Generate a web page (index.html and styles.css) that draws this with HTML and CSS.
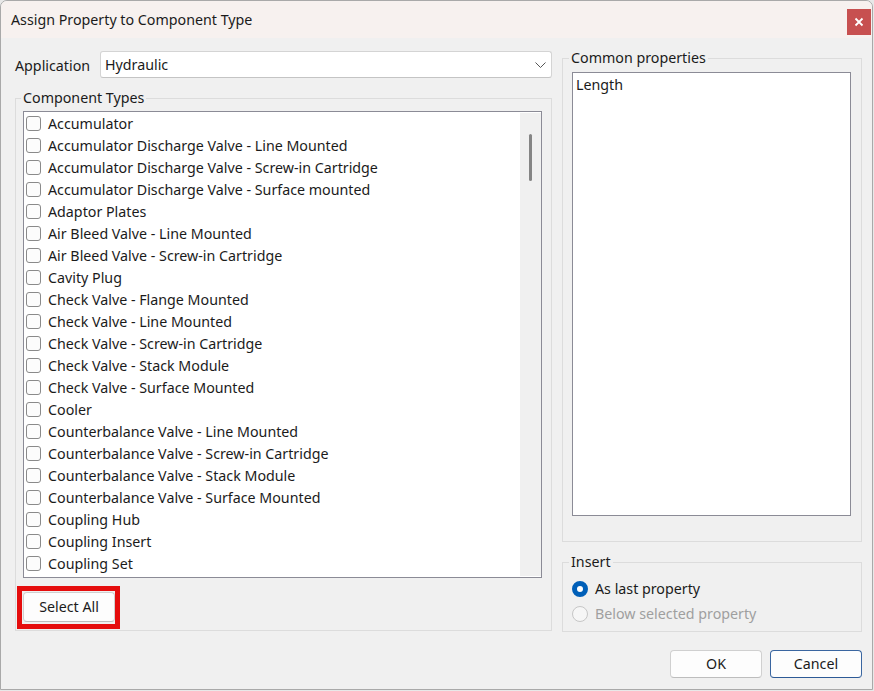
FILE: index.html
```html
<!DOCTYPE html>
<html>
<head>
<meta charset="utf-8">
<link rel="stylesheet" href="styles.css">
</head>
<body>
<div class="window">
  <div class="titlebar">
    <span class="title">Assign Property to Component Type</span>
    <button class="close" aria-label="Close">
      <svg width="10" height="10" viewBox="0 0 10 10"><path d="M1.5 1.5 L8.5 8.5 M8.5 1.5 L1.5 8.5" stroke="#fff" stroke-width="1.8" fill="none"/></svg>
    </button>
  </div>
  <div class="content">
    <div class="col-left">
      <div class="app-row">
        <span class="app-label">Application</span>
        <div class="select">
          <span>Hydraulic</span>
          <svg class="chev" width="11" height="7" viewBox="0 0 11 7"><polyline points="0.5,0.5 5.5,5.5 10.5,0.5" stroke="#555" stroke-width="1" fill="none"/></svg>
        </div>
      </div>
      <fieldset class="group group-types">
        <legend>Component Types</legend>
        <div class="listbox types">
          <div class="items">
            <div class="item"><span class="cb"></span>Accumulator</div>
            <div class="item"><span class="cb"></span>Accumulator Discharge Valve - Line Mounted</div>
            <div class="item"><span class="cb"></span>Accumulator Discharge Valve - Screw-in Cartridge</div>
            <div class="item"><span class="cb"></span>Accumulator Discharge Valve - Surface mounted</div>
            <div class="item"><span class="cb"></span>Adaptor Plates</div>
            <div class="item"><span class="cb"></span>Air Bleed Valve - Line Mounted</div>
            <div class="item"><span class="cb"></span>Air Bleed Valve - Screw-in Cartridge</div>
            <div class="item"><span class="cb"></span>Cavity Plug</div>
            <div class="item"><span class="cb"></span>Check Valve - Flange Mounted</div>
            <div class="item"><span class="cb"></span>Check Valve - Line Mounted</div>
            <div class="item"><span class="cb"></span>Check Valve - Screw-in Cartridge</div>
            <div class="item"><span class="cb"></span>Check Valve - Stack Module</div>
            <div class="item"><span class="cb"></span>Check Valve - Surface Mounted</div>
            <div class="item"><span class="cb"></span>Cooler</div>
            <div class="item"><span class="cb"></span>Counterbalance Valve - Line Mounted</div>
            <div class="item"><span class="cb"></span>Counterbalance Valve - Screw-in Cartridge</div>
            <div class="item"><span class="cb"></span>Counterbalance Valve - Stack Module</div>
            <div class="item"><span class="cb"></span>Counterbalance Valve - Surface Mounted</div>
            <div class="item"><span class="cb"></span>Coupling Hub</div>
            <div class="item"><span class="cb"></span>Coupling Insert</div>
            <div class="item"><span class="cb"></span>Coupling Set</div>
          </div>
          <div class="scrollbar"><div class="thumb"></div></div>
        </div>
        <div class="btn-row">
          <span class="highlight"><button class="btn btn-select">Select All</button></span>
        </div>
      </fieldset>
    </div>
    <div class="col-right">
      <fieldset class="group group-common">
        <legend>Common properties</legend>
        <div class="listbox common">
          <div class="prop">Length</div>
        </div>
      </fieldset>
      <fieldset class="group group-insert">
        <legend>Insert</legend>
        <div class="radio-row"><span class="radio checked"></span>As last property</div>
        <div class="radio-row disabled"><span class="radio"></span>Below selected property</div>
      </fieldset>
    </div>
  </div>
  <div class="footer">
    <button class="btn">OK</button>
    <button class="btn btn-cancel">Cancel</button>
  </div>
</div>
</body>
</html>
```
FILE: styles.css
```css
* { box-sizing: border-box; }
html, body { margin: 0; padding: 0; }
body {
  background: #e8e8e8;
  font-family: "Noto Sans", "Open Sans", sans-serif;
  font-size: 14.25px;
  color: #1b1b1b;
  width: 874px;
  height: 691px;
  overflow: hidden;
}
.window {
  width: 873px;
  height: 690px;
  background: #f0f0f0;
  border: 1px solid #a9a9a9;
  border-radius: 7px 7px 0 0;
  overflow: hidden;
  position: relative;
}
.titlebar {
  height: 37px;
  background: #f7f1ef;
  display: flex;
  align-items: center;
  justify-content: space-between;
  padding-left: 10px;
  padding-right: 1px;
}
.title { font-size: 14.25px; line-height: 20px; }
.close {
  width: 24px;
  height: 26px;
  margin-top: 4px;
  border: none;
  background: #c75050;
  display: flex;
  align-items: center;
  justify-content: center;
  padding: 0;
}
.content {
  display: flex;
  gap: 10px;
  padding: 13px 10px 0 14px;
}
.col-left { width: 537px; display: flex; flex-direction: column; }
.col-right { width: 300px; display: flex; flex-direction: column; margin-top: -3px; }
.app-row { display: flex; align-items: center; height: 27px; }
.app-label { width: 85px; padding-top: 2px; }
.select {
  flex: 1;
  height: 27px;
  background: #fff;
  border: 1px solid #d4d4d4;
  border-bottom-color: #c4c4c4;
  border-radius: 3px;
  display: flex;
  align-items: center;
  justify-content: space-between;
  padding: 0 5px 0 4px;
}
.chev { margin-top: 1px; }
.group {
  margin: 0;
  border: 1px solid #dcdcdc;
  min-width: 0;
}
.group legend {
  padding: 0 2px;
  line-height: 20px;
  height: 20px;
  margin-left: -3px;
}
.group-types {
  margin-top: 10px;
  padding: 0 9px 0 7px;
  height: 543px;
}
.group-types legend { margin-left: -2px; }
.listbox {
  background: #fff;
  border: 1px solid #8b8b96;
}
.types {
  margin-top: 3px;
  height: 467px;
  display: flex;
  overflow: hidden;
}
.items { flex: 1; padding-top: 0; padding-left: 2px; }
.item {
  height: 22px;
  display: flex;
  align-items: center;
  white-space: nowrap;
}
.cb {
  width: 15px;
  height: 15px;
  border: 1px solid #8a8a8a;
  border-radius: 3px;
  background: #fcfcfc;
  margin-right: 7px;
  flex: none;
  margin-top: 1px;
}
.scrollbar {
  width: 21px;
  background: #f0f0f0;
  margin: 1px 0;
  display: flex;
  justify-content: center;
}
.thumb {
  width: 3px;
  height: 47px;
  margin-top: 21px;
  background: #858585;
  border-radius: 2px;
}
.btn-row { margin-top: 8px; margin-left: -6px; }
.highlight {
  display: inline-block;
  border: 5px solid #e50d0d;
  padding: 1px 0 2px 1px;
}
.btn {
  font-family: inherit;
  font-size: 14.25px;
  color: #1b1b1b;
  width: 92px;
  height: 29px;
  background: #fdfdfd;
  border: 1px solid #d0d0d0;
  border-bottom-color: #bdbdbd;
  border-radius: 4px;
  padding: 0 0 2px 0;
  display: block;
}
.btn-select { width: 92px; height: 30px; }
.group-common {
  padding: 0 10px 25px 9px;
  height: 494px;
}
.common {
  margin-top: 4px;
  height: 444px;
  padding: 2px 3px;
}
.group-insert {
  margin-top: 10px;
  height: 80px;
  padding: 0 9px 0 9px;
}
.radio-row {
  height: 25px;
  display: flex;
  align-items: center;
}
.radio-row:first-of-type { margin-top: 4px; }
.radio {
  width: 16px;
  height: 16px;
  border-radius: 50%;
  border: 1px solid #c6c6c6;
  background: #f6f6f6;
  margin-right: 7px;
  flex: none;
  margin-top: 1px;
}
.radio.checked {
  border: 5px solid #005fb8;
  background: #fff;
}
.disabled { color: #9f9f9f; }
.footer {
  display: flex;
  justify-content: flex-end;
  gap: 8px;
  padding-right: 10px;
  margin-top: 18px;
}
.footer .btn { height: 28px; }
.btn-cancel { border-color: #3a66a0; border-bottom-color: #2d5a96; }
```
